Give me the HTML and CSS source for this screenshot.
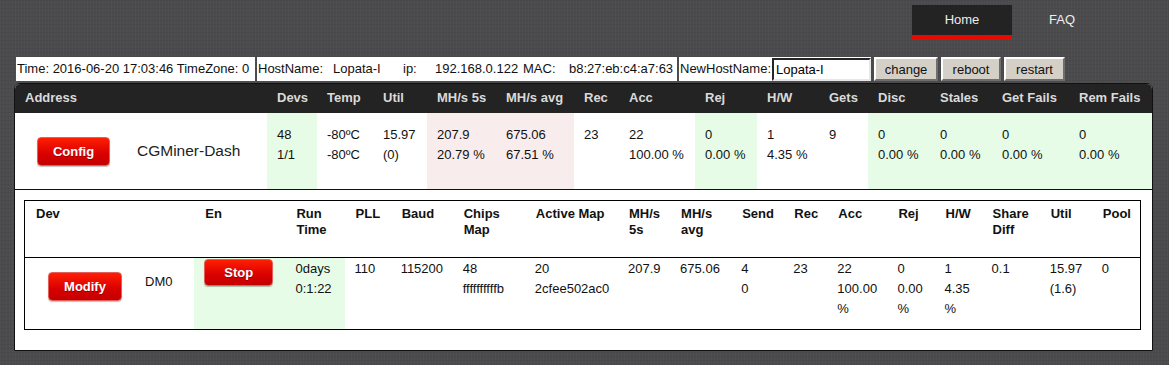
FILE: index.html
```html
<html>
<head>
<title>CGMiner Dash</title>
<link rel="stylesheet" href="styles.css">
</head>
<body>
<div class="nav">
  <a class="tab active">Home</a>
  <a class="tab">FAQ</a>
</div>

<div class="infobar">
  <div class="box box-time">Time: 2016-06-20 17:03:46 TimeZone: 0</div>
  <div class="box box-host">
    <span class="lbl-host">HostName:</span><span class="val-host">Lopata-I</span><span class="lbl-ip">ip:</span><span class="val-ip">192.168.0.122</span><span class="lbl-mac">MAC:</span><span>b8:27:eb:c4:a7:63</span>
  </div>
  <div class="box box-new">NewHostName:<input class="hostinput" type="text" value="Lopata-I"></div>
  <button class="gray">change</button>
  <button class="gray">reboot</button>
  <button class="gray">restart</button>
</div>

<div class="panel">
<table class="summary">
  <colgroup>
    <col style="width:252px"><col style="width:50px"><col style="width:56px"><col style="width:54px">
    <col style="width:69px"><col style="width:78px"><col style="width:45px"><col style="width:76px">
    <col style="width:62px"><col style="width:62px"><col style="width:49px"><col style="width:62px">
    <col style="width:62px"><col style="width:77px"><col style="width:83px">
  </colgroup>
  <tr class="head">
    <th>Address</th><th>Devs</th><th>Temp</th><th>Util</th><th>MH/s 5s</th><th>MH/s avg</th><th>Rec</th><th>Acc</th>
    <th>Rej</th><th>H/W</th><th>Gets</th><th>Disc</th><th>Stales</th><th>Get Fails</th><th>Rem Fails</th>
  </tr>
  <tr class="miner">
    <td class="addr"><div class="addr-inner"><a class="redbtn config">Config</a><span class="name">CGMiner-Dash</span></div></td>
    <td class="ok">48<br>1/1</td>
    <td>-80ºC<br>-80ºC</td>
    <td>15.97<br>(0)</td>
    <td class="warn">207.9<br>20.79 %</td>
    <td class="warn">675.06<br>67.51 %</td>
    <td>23</td>
    <td>22<br>100.00 %</td>
    <td class="ok">0<br>0.00 %</td>
    <td>1<br>4.35 %</td>
    <td>9</td>
    <td class="ok">0<br>0.00 %</td>
    <td class="ok">0<br>0.00 %</td>
    <td class="ok">0<br>0.00 %</td>
    <td class="ok">0<br>0.00 %</td>
  </tr>
</table>

<div class="devices">
<table class="devs">
  <colgroup>
    <col style="width:169px"><col style="width:91px"><col style="width:59px"><col style="width:46px">
    <col style="width:62px"><col style="width:72px"><col style="width:93px"><col style="width:52px">
    <col style="width:61px"><col style="width:52px"><col style="width:44px"><col style="width:60px">
    <col style="width:47px"><col style="width:47px"><col style="width:58px"><col style="width:52px">
    <col style="width:48px">
  </colgroup>
  <tr class="dhead">
    <th>Dev</th><th>En</th><th>Run Time</th><th>PLL</th><th>Baud</th><th>Chips Map</th><th>Active Map</th>
    <th>MH/s 5s</th><th>MH/s avg</th><th>Send</th><th>Rec</th><th>Acc</th><th>Rej</th><th>H/W</th>
    <th>Share Diff</th><th>Util</th><th>Pool</th>
  </tr>
  <tr class="drow">
    <td class="dev"><div class="dev-inner"><a class="redbtn modify">Modify</a><span class="devname">DM0</span></div></td>
    <td class="ok"><a class="redbtn stop">Stop</a></td>
    <td class="ok">0days<br>0:1:22</td>
    <td>110</td>
    <td>115200</td>
    <td>48<br>ffffffffffb</td>
    <td>20<br>2cfee502ac0</td>
    <td>207.9</td>
    <td>675.06</td>
    <td>4<br>0</td>
    <td>23</td>
    <td>22<br>100.00<br>%</td>
    <td>0<br>0.00<br>%</td>
    <td>1<br>4.35<br>%</td>
    <td>0.1</td>
    <td>15.97<br>(1.6)</td>
    <td>0</td>
  </tr>
</table>
</div>
</div>
</body>
</html>
```

FILE: styles.css
```css
html, body {
  margin: 0;
  padding: 0;
}
body {
  font-family: 'Liberation Sans', Arial, sans-serif;
  font-size: 13px;
  color: #111;
  background-color: #4b4b4d;
  background-image:
    repeating-linear-gradient(90deg, rgba(255,255,255,0.025) 0 1px, transparent 1px 3px),
    repeating-linear-gradient(0deg, rgba(0,0,0,0.05) 0 1px, transparent 1px 4px);
  height: 365px;
  overflow: hidden;
}

/* top menu */
.nav {
  display: flex;
  justify-content: flex-end;
  padding: 5px 57px 0 0;
}
.tab {
  width: 100px;
  height: 30px;
  line-height: 30px;
  text-align: center;
  color: #eee;
  font-size: 13px;
  border-bottom: 4px solid transparent;
}
.tab.active {
  background: #232323;
  border-bottom-color: #e80a00;
}

/* host info line */
.infobar {
  display: flex;
  align-items: stretch;
  margin: 18px 0 2px 16px;
  height: 24px;
}
.box {
  background: #fff;
  line-height: 24px;
  white-space: nowrap;
  margin-right: 2px;
}
.box-time {
  width: 238px;
  padding-left: 1px;
}
.box-host {
  width: 419px;
  padding-left: 1px;
}
.lbl-host { display:inline-block; width: 75px; }
.val-host { display:inline-block; width: 70px; }
.lbl-ip { display:inline-block; width: 32px; }
.val-ip { display:inline-block; width: 88px; }
.lbl-mac { display:inline-block; width: 46px; }
.box-new {
  padding-left: 1px;
  display: flex;
  align-items: center;
  margin-right: 3px;
}
.hostinput {
  margin-left: 1px;
  width: 99px;
  height: 23px;
  box-sizing: border-box;
  border: 2px inset #a0a0a0;
  border-color: #7a7a7a #e6e6e6 #e6e6e6 #7a7a7a;
  font-family: 'Liberation Sans', Arial, sans-serif;
  font-size: 13px;
  padding: 0 2px;
}
.gray {
  font-family: 'Liberation Sans', Arial, sans-serif;
  font-size: 13px;
  background: #d4d0c8;
  border: 2px solid;
  border-color: #fff #6e6e6e #6e6e6e #fff;
  height: 24px;
  padding: 0;
  margin-right: 3px;
  color: #111;
}
.gray:nth-of-type(1) { width: 64px; }
.gray:nth-of-type(2) { width: 60px; }
.gray:nth-of-type(3) { width: 61px; }

/* summary panel */
.panel {
  margin-left: 14px;
  width: 1137px;
  background: #fff;
  border: 1px solid #111;
  border-radius: 6px 6px 0 0;
  overflow: hidden;
}
table {
  border-collapse: separate;
  border-spacing: 0;
  table-layout: fixed;
  font-size: 13px;
  color: #111;
}
.summary {
  width: 1137px;
}
.head th {
  background: #232323;
  color: #dadada;
  font-weight: bold;
  text-align: left;
  height: 29px;
  padding: 0 0 2px 10px;
  white-space: nowrap;
}
.miner td {
  vertical-align: top;
  padding: 12px 0 0 10px;
  height: 77px;
  line-height: 20px;
  border-bottom: 1px solid #111;
  white-space: nowrap;
}
.miner td.addr {
  vertical-align: middle;
  padding: 0 0 0 10px;
}
.addr-inner {
  display: flex;
  align-items: center;
}
.name {
  font-size: 15.5px;
  margin-left: 27px;
  color: #222;
}
.ok { background: #e6fce6; }
.warn { background: #f9ecec; }

/* red buttons */
.redbtn {
  display: inline-block;
  box-sizing: border-box;
  text-align: center;
  color: #fff;
  font-weight: bold;
  font-size: 13px;
  background: linear-gradient(#ff1e00, #d80000 60%, #c40000);
  border: 1px solid #e3605a;
  border-radius: 4px;
  text-shadow: 0 1px 0 #900;
  box-shadow: 0 1px 1px rgba(0,0,0,0.25);
}
.config {
  width: 73px;
  height: 29px;
  line-height: 27px;
  margin-left: 12px;
}
.modify {
  width: 74px;
  height: 29px;
  line-height: 27px;
  margin-left: 12px;
}
.stop {
  width: 69px;
  height: 27px;
  line-height: 25px;
}

/* device table */
.devices {
  padding: 10px 0 20px 9px;
}
.devs {
  width: 1117px;
  border: 1px solid #000;
}
.dhead th {
  text-align: left;
  vertical-align: top;
  font-weight: bold;
  line-height: 16px;
  height: 57px;
  padding: 5px 0 0 11px;
  border-bottom: 1px solid #000;
}
.drow td {
  vertical-align: top;
  line-height: 20px;
  height: 71px;
  padding: 1px 0 0 10px;
  white-space: nowrap;
}
.drow td.dev {
  padding: 14px 0 0 11px;
}
.dev-inner {
  display: flex;
  align-items: flex-start;
}
.devname {
  margin: 0 0 0 23px;
}
```
